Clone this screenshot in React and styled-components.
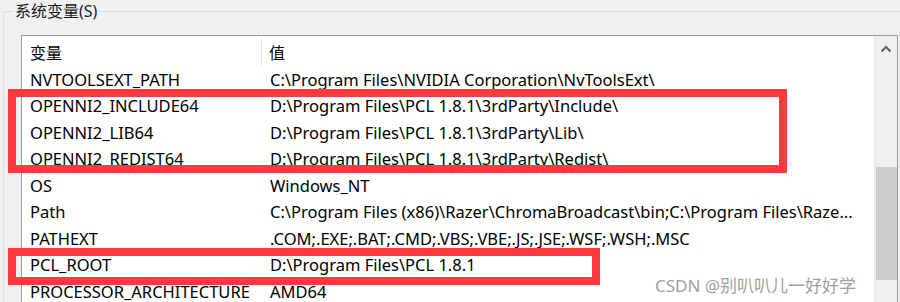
import React from "react";
import styled, { createGlobalStyle } from "styled-components";

const GlobalStyle = createGlobalStyle`
  html, body {
    margin: 0;
    background: #f0f0f0;
    overflow: hidden;
  }
`;

const Page = styled.div`
  position: relative;
  width: 900px;
  height: 302px;
  overflow: hidden;
  background: #f0f0f0;
  font-family: "Noto Sans", "Noto Sans CJK SC", sans-serif;
  color: #000;
`;

const Group = styled.fieldset`
  margin: 0 0 0 3px;
  padding: 0 0 0 17px;
  border: 1px solid #dcdcdc;
  border-right: none;
  border-bottom: none;
  min-width: 0;
`;

const Legend = styled.legend`
  margin-left: -8px;
  padding: 0 2px;
  font-size: 16px;
  line-height: 22px;
  color: #1a1a1a;
`;

const ListBox = styled.div`
  display: flex;
  margin-top: 13px;
  width: 875px;
  height: 300px;
  background: #fff;
  border: 1px solid #9a9a9a;
`;

const Content = styled.div`
  flex: 1;
  min-width: 0;
  border-right: 1px solid #e8e8e8;
`;

const Header = styled.div`
  display: grid;
  grid-template-columns: 240px 1fr;
  height: 30px;
`;

const HeadCell = styled.div`
  display: flex;
  align-items: center;
  padding-left: ${(p) => p.$pad}px;
  font-size: 16px;
  border-right: ${(p) => (p.$sep ? "1px solid #e5e5e5" : "none")};
  margin: 2px 0 0;
`;

const Row = styled.div`
  display: grid;
  grid-template-columns: 241px 1fr;
  height: 26.5px;
  align-items: center;
  font-size: 16.5px;
  white-space: nowrap;
`;

const Cell = styled.div`
  padding-left: ${(p) => p.$pad}px;
  overflow: hidden;
`;

const Scrollbar = styled.div`
  display: flex;
  flex-direction: column;
  align-items: center;
  width: 22px;
  background: #f0f0f0;
`;

const Arrow = styled.svg`
  margin-top: 9px;
  width: 12px;
  height: 8px;
`;

const Thumb = styled.div`
  margin-top: 114px;
  width: 21px;
  height: 113px;
  background: #cdcdcd;
`;

const Mark = styled.div`
  position: absolute;
  left: ${(p) => p.$x}px;
  top: ${(p) => p.$y}px;
  width: ${(p) => p.$w}px;
  height: ${(p) => p.$h}px;
  box-sizing: border-box;
  border: 8px solid #fd3a3f;
`;

const Watermark = styled.div`
  position: absolute;
  left: 655px;
  top: 272px;
  font-size: 17px;
  color: #a0a0a0;
  text-shadow: 0 0 2px #fff;
  white-space: nowrap;
`;

const rows = [
  ["NVTOOLSEXT_PATH", "C:\\Program Files\\NVIDIA Corporation\\NvToolsExt\\"],
  ["OPENNI2_INCLUDE64", "D:\\Program Files\\PCL 1.8.1\\3rdParty\\Include\\"],
  ["OPENNI2_LIB64", "D:\\Program Files\\PCL 1.8.1\\3rdParty\\Lib\\"],
  ["OPENNI2_REDIST64", "D:\\Program Files\\PCL 1.8.1\\3rdParty\\Redist\\"],
  ["OS", "Windows_NT"],
  ["Path", "C:\\Program Files (x86)\\Razer\\ChromaBroadcast\\bin;C:\\Program Files\\Raze..."],
  ["PATHEXT", ".COM;.EXE;.BAT;.CMD;.VBS;.VBE;.JS;.JSE;.WSF;.WSH;.MSC"],
  ["PCL_ROOT", "D:\\Program Files\\PCL 1.8.1"],
  ["PROCESSOR_ARCHITECTURE", "AMD64"],
];

export default function App() {
  return (
    <Page>
      <GlobalStyle />
      <Group>
        <Legend>系统变量(S)</Legend>
        <ListBox>
          <Content>
            <Header>
              <HeadCell $pad={8} $sep>变量</HeadCell>
              <HeadCell $pad={7}>值</HeadCell>
            </Header>
            {rows.map(([name, value]) => (
              <Row key={name}>
                <Cell $pad={8}>{name}</Cell>
                <Cell $pad={7}>{value}</Cell>
              </Row>
            ))}
          </Content>
          <Scrollbar>
            <Arrow viewBox="0 0 12 8">
              <path d="M1.5 6.5 L6 2 L10.5 6.5" fill="none" stroke="#606060" strokeWidth="2" />
            </Arrow>
            <Thumb />
          </Scrollbar>
        </ListBox>
      </Group>
      <Mark $x={8} $y={89} $w={779} $h={84} />
      <Mark $x={8} $y={248} $w={592} $h={37} />
      <Watermark>CSDN @别叭叭儿一好好学</Watermark>
    </Page>
  );
}
